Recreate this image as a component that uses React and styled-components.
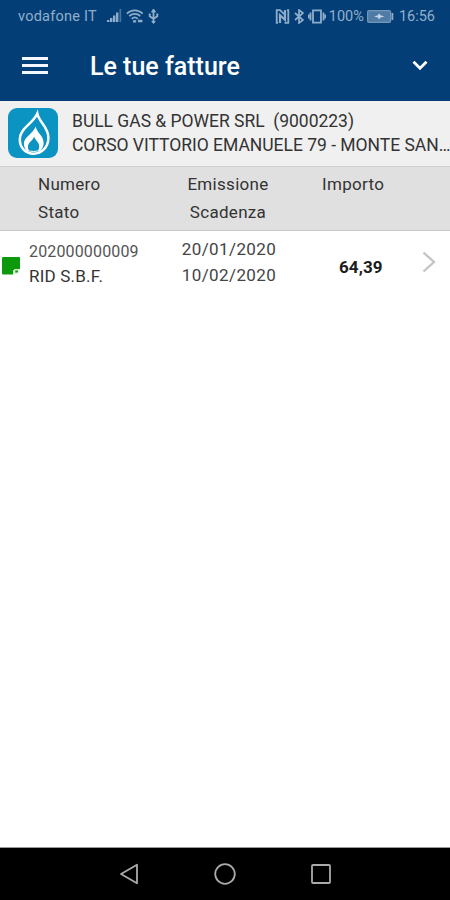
import React from "react";
import styled, {createGlobalStyle} from "styled-components";

const invoices = [
    {
        number: '202000000009',
        status: 'RID S.B.F.',
        issued: '20/01/2020',
        due: '10/02/2020',
        amount: '64,39'
    }
];

const SignalIcon = () => (
    <svg width="15" height="14" viewBox="0 0 15 14" fill="#8fadca">
        <path d="M0 11h2.4v2H0zM3 9h2.4v4H3zM6 6.5h2.4V13H6zM9 3.5h2.4V13H9z"/>
        <path d="M12.5 0h1.7v13h-1.7z" opacity=".5"/>
    </svg>
);

const WifiIcon = () => (
    <svg width="18" height="15" viewBox="0 0 18 15" fill="none" stroke="#8fadca" strokeWidth="1.7">
        <path d="M.8 4.6C5.3.2 12.2.2 16.7 4.6M3.2 7.2c3.2-3 7.9-3 11.1 0M5.7 9.8c1.8-1.6 4.3-1.6 6.1 0"/>
        <path d="M7 12.4h3.2M12 12h4.4" strokeWidth="2.4"/>
    </svg>
);

const UsbIcon = () => (
    <svg width="11" height="15" viewBox="0 0 11 15" fill="none" stroke="#8fadca" strokeWidth="1.8">
        <path d="M5.5 2v11M1.7 5v2.2l3.8 2.6 3.8-2.6V5"/>
        <path d="M5.5 0l2 3h-4zM5.5 14.5l-1.7-2h3.4zM.7 5h2M8.3 5h2" fill="#8fadca" strokeWidth="1"/>
    </svg>
);

const NfcIcon = () => (
    <svg width="15" height="15" viewBox="0 0 15 15" fill="none" stroke="#8fadca">
        <path d="M5.5 1.2H1.7v12.6H3M9.5 13.8h3.8V1.2H12" strokeWidth="1.8"/>
        <path d="M5 14V6.2l5 4.6V1" strokeWidth="2.2"/>
        <path d="M5 1.2l5 4.6" strokeWidth="1.8"/>
    </svg>
);

const BluetoothIcon = () => (
    <svg width="10" height="15" viewBox="0 0 10 15" fill="none" stroke="#8fadca" strokeWidth="1.7">
        <path d="M1 4l8 7-4 3V1l4 3-8 7"/>
    </svg>
);

const VibrateIcon = () => (
    <svg width="18" height="15" viewBox="0 0 18 15" fill="none" stroke="#8fadca" strokeWidth="1.8">
        <path d="M5 1.3h8v12.4H5zM2.5 3.5v8M15.5 3.5v8M.6 5.5v4M17.4 5.5v4"/>
    </svg>
);

const BatteryIcon = () => (
    <svg width="27" height="13" viewBox="0 0 27 13">
        <rect x=".6" y=".6" width="23" height="11.8" rx="1.5" fill="#4f7ca6" stroke="#7396b8" strokeWidth="1.2"/>
        <path d="M24.5 3h1.8v7h-1.8z" fill="#8fadca"/>
        <path d="M7 6.5l4-1.2 1-2 1.5 2 4 1.2-4 1-1.5 2-1-2z" fill="#c5d5e4"/>
    </svg>
);

const FlameLogo = () => (
    <svg width="50" height="50" viewBox="0 0 50 50">
        <rect width="50" height="50" rx="9" fill="#0b94c1"/>
        <path
            d="M29.3 5.5C31 14.5 40.6 19 40.4 30C40.2 39.5 33.5 45.7 25.5 45.7C17.5 45.7 11.8 39.5 11.8 31.5C11.8 20 24.5 16.5 29.3 5.5Z"
            fill="none" stroke="#fff" strokeWidth="2.5"/>
        <path
            d="M27.7 18.5C28.5 24.5 35.6 27.5 35.6 35C35.6 38.5 34 41.5 31.5 43.2L19.5 43.2C17 41.3 15.8 38.8 15.9 35.5C16.2 28.5 25 26 27.7 18.5Z"
            fill="#fff"/>
        <path
            d="M26.2 28.5C26.7 32 31.2 33.8 31.2 38.3C31.2 40.5 30.5 42.4 29.3 44H21.7C20.5 42.6 20 40.8 20 38.5C20.2 34 24.7 33 26.2 28.5Z"
            fill="#0b94c1"/>
        <path d="M18 41.8Q25.5 45.2 33 41.8" fill="none" stroke="#fff" strokeWidth="1"/>
    </svg>
);

const StatusMark = () => (
    <svg width="18" height="18" viewBox="0 0 18 18">
        <path d="M1 0h16q1 0 1 1v11h-5l-2 2v3.5H1q-1 0-1-1V1q0-1 1-1z" fill="#0c990c"/>
        <path d="M11 14l2-2h5l-1.5 3.5-3.5 2h-2z" fill="#d9f1d9"/>
        <path d="M13.3 13.6h2.6v2h-2.6z" fill="#0c990c"/>
    </svg>
);

const App = () => {
    return (
        <Screen>
            <GlobalStyle/>
            <StatusBar>
                <StatusGroup>
                    <StatusText $spacing="0.25px">vodafone IT</StatusText>
                    <IconRow $gap="4px" $offset="10px">
                        <SignalIcon/>
                        <WifiIcon/>
                        <UsbIcon/>
                    </IconRow>
                </StatusGroup>
                <StatusGroup>
                    <IconRow $gap="4px">
                        <NfcIcon/>
                        <BluetoothIcon/>
                        <VibrateIcon/>
                    </IconRow>
                    <StatusText $offset="3px">100%</StatusText>
                    <IconRow $offset="3px"><BatteryIcon/></IconRow>
                    <StatusText $offset="5px">16:56</StatusText>
                </StatusGroup>
            </StatusBar>
            <Header>
                <MenuButton aria-label="Menu">
                    <svg width="26" height="17" viewBox="0 0 26 17" fill="#f4f7ff">
                        <path d="M0 0h26v3H0zM0 7h26v3H0zM0 14h26v3H0z"/>
                    </svg>
                </MenuButton>
                <Title>Le tue fatture</Title>
                <ToggleButton aria-label="Espandi">
                    <svg width="16" height="11" viewBox="0 0 16 11" fill="none" stroke="#fff" strokeWidth="2.8">
                        <path d="M1.5 1.7L8 8.2l6.5-6.5"/>
                    </svg>
                </ToggleButton>
            </Header>
            <Supply>
                <FlameLogo/>
                <SupplyText>
                    <SupplyLine>{'BULL GAS & POWER SRL  (9000223)'}</SupplyLine>
                    <SupplyLine>CORSO VITTORIO EMANUELE 79 - MONTE SAN…</SupplyLine>
                </SupplyText>
            </Supply>
            <TableHead>
                <HeadCell $pad="38px">
                    <HeadText>Numero</HeadText>
                    <HeadText>Stato</HeadText>
                </HeadCell>
                <HeadCell $center>
                    <HeadText>Emissione</HeadText>
                    <HeadText>Scadenza</HeadText>
                </HeadCell>
                <HeadCell $pad="18px">
                    <HeadText>Importo</HeadText>
                </HeadCell>
            </TableHead>
            <List>
                {invoices.map((invoice) => (
                    <Row key={invoice.number}>
                        <Mark><StatusMark/></Mark>
                        <NumberCell>
                            <NumberText>{invoice.number}</NumberText>
                            <StateText>{invoice.status}</StateText>
                        </NumberCell>
                        <DateCell>
                            <DateText>{invoice.issued}</DateText>
                            <DateText>{invoice.due}</DateText>
                        </DateCell>
                        <Amount>{invoice.amount}</Amount>
                        <Arrow>
                            <svg width="14" height="22" viewBox="0 0 14 22" fill="none" stroke="#c3c3c3" strokeWidth="2.3">
                                <path d="M1.5 1.5L12 11 1.5 20.5"/>
                            </svg>
                        </Arrow>
                    </Row>
                ))}
            </List>
            <NavBar>
                <svg width="20" height="22" viewBox="0 0 20 22">
                    <path d="M2 11L18 1.7v18.6z" strokeLinejoin="round"/>
                </svg>
                <svg width="22" height="22" viewBox="0 0 22 22">
                    <circle cx="11" cy="11" r="9.8"/>
                </svg>
                <svg width="20" height="20" viewBox="0 0 20 20">
                    <rect x="1" y="1" width="18" height="18" rx="1"/>
                </svg>
            </NavBar>
        </Screen>
    )
}

const GlobalStyle = createGlobalStyle`
  * {
    box-sizing: border-box;
  }

  body {
    margin: 0;
    background: #fff;
    font-family: Roboto, "Noto Sans", sans-serif;
  }

  svg {
    display: block;
    flex-shrink: 0;
  }
`;

const Screen = styled.div`
  display: flex;
  flex-direction: column;
  width: 450px;
  height: 900px;
  overflow: hidden;
  background: #fff;
`;

const StatusBar = styled.div`
  display: flex;
  justify-content: space-between;
  height: 32px;
  padding: 0 15px 0 18px;
  background: #033f76;
`;

const StatusGroup = styled.div`
  display: flex;
  align-items: center;
`;

const StatusText = styled.span`
  margin-left: ${({$offset}) => $offset || 0};
  font-size: 14.5px;
  letter-spacing: ${({$spacing}) => $spacing || 0};
  color: #91afcc;
  white-space: nowrap;
`;

const IconRow = styled.div`
  display: flex;
  align-items: center;
  gap: ${({$gap}) => $gap || 0};
  margin-left: ${({$offset}) => $offset || 0};
`;

const Header = styled.header`
  display: flex;
  align-items: center;
  height: 69px;
  padding: 0 22px 2px 22px;
  background: #033f76;
`;

const IconButton = styled.button`
  padding: 0;
  border: 0;
  background: none;
`;

const MenuButton = styled(IconButton)`
  width: 68px;
`;

const ToggleButton = styled(IconButton)`
  margin-left: auto;
`;

const Title = styled.h1`
  margin: 2px 0 0;
  font-size: 25px;
  font-weight: 500;
  color: #fff;
  white-space: nowrap;
`;

const Supply = styled.section`
  display: flex;
  gap: 14px;
  height: 65px;
  padding: 7px 0 0 8px;
  background: #f0f0f0;
`;

const SupplyText = styled.div`
  padding-top: 1px;
`;

const SupplyLine = styled.div`
  font-size: 17.5px;
  line-height: 24px;
  letter-spacing: -0.02px;
  color: #333;
  white-space: pre;
`;

const TableHead = styled.div`
  display: grid;
  grid-template-columns: 152px 152px 146px;
  height: 65px;
  padding-top: 4px;
  border-top: 1px solid #cfcfcf;
  border-bottom: 1px solid #c8c8c8;
  background: #e0e0e0;
`;

const HeadCell = styled.div`
  padding-left: ${({$pad}) => $pad || 0};
  text-align: ${({$center}) => $center ? 'center' : 'left'};
`;

const HeadText = styled.div`
  font-size: 17px;
  line-height: 27.5px;
  letter-spacing: 0.3px;
  color: #333;
`;

const List = styled.main`
  flex: 1;
`;

const Row = styled.div`
  display: grid;
  grid-template-columns: 29px 124px 152px 117px 28px;
  height: 65px;
`;

const Mark = styled.div`
  padding: 26px 0 0 2px;
`;

const NumberCell = styled.div`
  padding-top: 8px;
`;

const NumberText = styled.div`
  font-size: 16px;
  line-height: 25px;
  letter-spacing: 0.15px;
  color: #555;
`;

const StateText = styled.div`
  font-size: 17px;
  line-height: 25px;
  letter-spacing: 0.2px;
  color: #333;
`;

const DateCell = styled.div`
  padding-top: 5px;
  text-align: center;
`;

const DateText = styled.div`
  font-size: 17px;
  line-height: 26px;
  letter-spacing: 0.4px;
  color: #444;
`;

const Amount = styled.div`
  padding: 23px 0 0 34px;
  font-size: 17px;
  font-weight: 700;
  line-height: 27px;
  letter-spacing: 0.1px;
  color: #1c1c1c;
`;

const Arrow = styled.div`
  padding-top: 20px;
`;

const NavBar = styled.nav`
  display: flex;
  align-items: center;
  justify-content: space-between;
  height: 53px;
  padding: 0 119px;
  border-top: 1px solid #999;
  background: #000;

  svg {
    fill: none;
    stroke: #aaa;
    stroke-width: 1.8;
  }
`;

export default App;
